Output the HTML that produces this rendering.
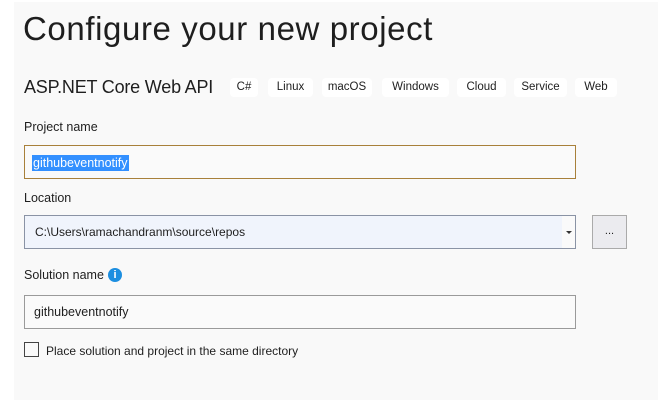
<!DOCTYPE html>
<html><head><style>
body{margin:0;width:658px;height:400px;background:#fff;position:relative;overflow:hidden;font-family:"Liberation Sans",sans-serif;color:#1e1e1e}
.panel{position:absolute;left:14px;top:2px;right:0;bottom:0;background:#f9f9f9}
.a{position:absolute;white-space:nowrap}
.tag{position:absolute;top:78px;height:19px;background:#fff;border-radius:4px;font-size:11.5px;line-height:19px;text-align:center;color:#1e1e1e}
.lbl{font-size:12.5px}
.box{position:absolute;left:24px;width:550px;height:32px;box-sizing:border-box}
</style></head><body>
<div class="panel"></div>
<div class="a" style="left:23px;top:10px;font-size:33px;letter-spacing:0.6px">Configure your new project</div>
<div class="a" style="left:24px;top:77px;font-size:18px;letter-spacing:-0.2px">ASP.NET Core Web API</div>
<div class="tag" style="left:230px;width:28px">C#</div>
<div class="tag" style="left:268px;width:45px">Linux</div>
<div class="tag" style="left:322px;width:50px">macOS</div>
<div class="tag" style="left:382px;width:67px">Windows</div>
<div class="tag" style="left:457px;width:49px">Cloud</div>
<div class="tag" style="left:514px;width:53px">Service</div>
<div class="tag" style="left:575px;width:42px">Web</div>
<div class="a lbl" style="left:24px;top:120px">Project name</div>
<div class="box" style="top:145px;height:34px;width:552px;border:1px solid #a8803a;background:#fafafa"></div>
<div class="a" style="left:32px;top:155px;height:16px;padding:0 1px;background:#3390ff;color:#fff;font-size:12.5px;line-height:16px">githubeventnotify</div>
<div class="a lbl" style="left:24px;top:191px">Location</div>
<div class="box" style="top:215px;height:34px;width:552px;border:1px solid #8a93a5;background:#f0f4fc"></div>
<div class="a" style="left:562px;top:216px;width:13px;height:32px;background:#fafafa"></div>
<div class="a" style="left:566px;top:231px;width:0;height:0;border-left:3px solid transparent;border-right:3px solid transparent;border-top:3px solid #333"></div>
<div class="a" style="left:35px;top:225px;font-size:12px">C:\Users\ramachandranm\source\repos</div>
<div class="a" style="left:592px;top:215px;width:33px;height:32px;background:#ebebef;border:1px solid #aaa;text-align:center;font-size:11px;line-height:30px">...</div>
<div class="a lbl" style="left:24px;top:268px">Solution name</div>
<div class="a" style="left:108px;top:268px;width:14px;height:14px;border-radius:50%;background:#1c8ee0;color:#fff;font-size:11px;font-weight:bold;text-align:center;line-height:14px">i</div>
<div class="box" style="top:295px;height:34px;width:552px;border:1px solid #9a9a9a;background:#fafafa"></div>
<div class="a" style="left:34px;top:305px;font-size:12.5px">githubeventnotify</div>
<div class="a" style="left:24px;top:342px;width:13px;height:13px;border:1px solid #444;background:#fafafa"></div>
<div class="a" style="left:46px;top:344px;font-size:12px">Place solution and project in the same directory</div>
</body></html>
